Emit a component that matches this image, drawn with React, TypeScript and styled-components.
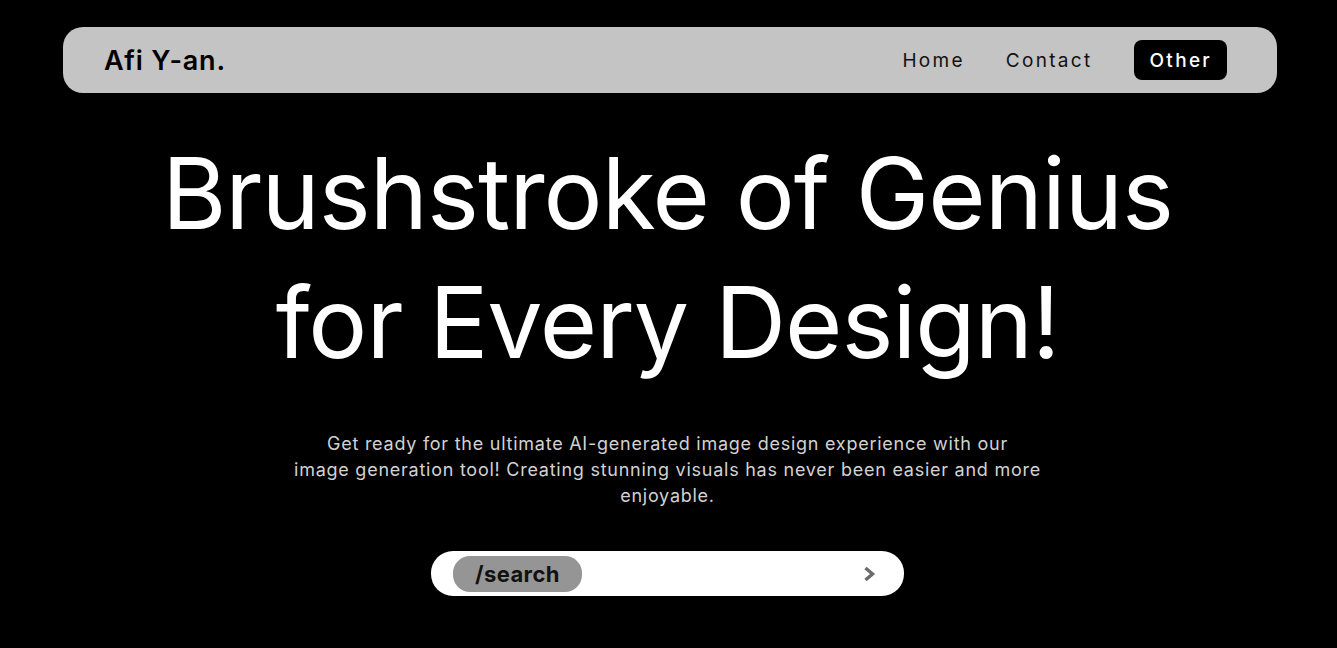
import React from "react";
import styled, { createGlobalStyle } from "styled-components";

const Global = createGlobalStyle`
  html, body { margin: 0; padding: 0; background: #000; }
  body { font-family: "Inter", "Noto Sans", sans-serif; }
  * { box-sizing: border-box; }
`;

const Page = styled.div`
  min-height: 648px;
  background: #000;
  padding: 27px 2px 0 0;
  display: flex;
  flex-direction: column;
  align-items: center;
`;

const Nav = styled.nav`
  align-self: stretch;
  margin: 0 58px 0 63px;
  height: 66px;
  background: #c4c4c4;
  border-radius: 20px;
  display: flex;
  align-items: center;
  justify-content: space-between;
  padding: 0 50px 0 41px;
`;

const Logo = styled.div`
  font-size: 27px;
  font-weight: 600;
  color: #000;
  letter-spacing: 0.8px;
`;

const Links = styled.div`
  display: flex;
  align-items: center;
  gap: 41px;
`;

const NavLink = styled.a<{ $active?: boolean }>`
  font-size: 19px;
  letter-spacing: 2.3px;
  color: ${(p) => (p.$active ? "#fff" : "#111")};
  background: ${(p) => (p.$active ? "#000" : "transparent")};
  border-radius: 8px;
  height: ${(p) => (p.$active ? "40px" : "auto")};
  display: flex;
  align-items: center;
  padding: ${(p) => (p.$active ? "0 15px 0 16px" : "0")};
  text-decoration: none;
  font-weight: ${(p) => (p.$active ? 500 : 400)};
`;

const Title = styled.h1`
  margin: 36px 0 0;
  color: #fff;
  font-weight: 400;
  font-size: 98.5px;
  line-height: 129px;
  text-align: center;
  letter-spacing: -1px;
`;

const Lead = styled.p`
  margin: 44px 0 0;
  color: #d2d2d2;
  font-size: 18px;
  line-height: 26px;
  letter-spacing: 0.75px;
  text-align: center;
`;

const Search = styled.div`
  margin-top: 42px;
  width: 473px;
  height: 45px;
  background: #fff;
  border-radius: 22px;
  display: flex;
  align-items: center;
  justify-content: space-between;
  padding: 0 26px 0 22px;
`;

const Pill = styled.span`
  background: #959595;
  color: #111;
  border-radius: 17px;
  height: 36px;
  padding: 0 22px;
  display: flex;
  align-items: center;
  font-size: 22px;
  font-weight: 700;
  letter-spacing: 0.4px;
`;

const Arrow = styled.svg`
  width: 16px;
  height: 20px;
`;

export default function App() {
  return (
    <>
      <Global />
      <Page>
        <Nav>
          <Logo>Afi Y-an.</Logo>
          <Links>
            <NavLink>Home</NavLink>
            <NavLink>Contact</NavLink>
            <NavLink $active>Other</NavLink>
          </Links>
        </Nav>
        <Title>
          Brushstroke of Genius
          <br />
          for Every Design!
        </Title>
        <Lead>
          Get ready for the ultimate AI-generated image design experience with our
          <br />
          image generation tool! Creating stunning visuals has never been easier and more
          <br />
          enjoyable.
        </Lead>
        <Search>
          <Pill>/search</Pill>
          <Arrow viewBox="0 0 16 20">
            <path d="M3.5 4 L10.5 10 L3.5 16" fill="none" stroke="#6b6b6b" strokeWidth="3.4" strokeLinejoin="miter" />
          </Arrow>
        </Search>
      </Page>
    </>
  );
}
